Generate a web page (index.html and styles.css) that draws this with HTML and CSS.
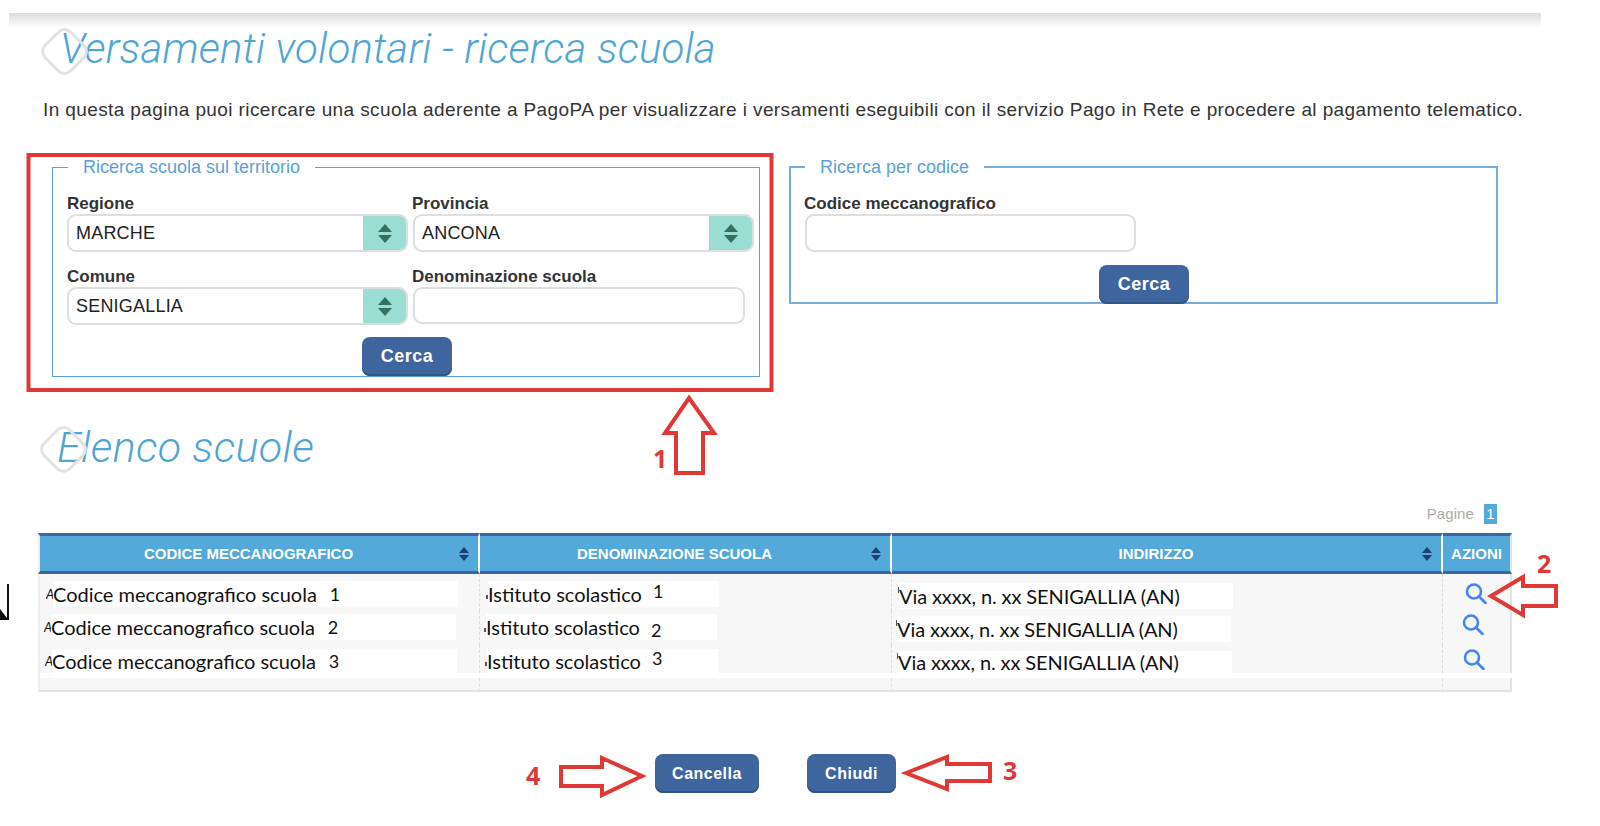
FILE: index.html
```html
<!DOCTYPE html>
<html lang="it">
<head>
<meta charset="UTF-8">
<title>Versamenti volontari - ricerca scuola</title>
<link rel="stylesheet" href="styles.css">
</head>
<body>
<div class="topbar"></div>

<h1 class="title">Versamenti volontari - ricerca scuola</h1>
<p class="intro">In questa pagina puoi ricercare una scuola aderente a PagoPA per visualizzare i versamenti eseguibili con il servizio Pago in Rete e procedere al pagamento telematico.</p>

<div class="forms">
    <fieldset class="box box-area">
        <legend>Ricerca scuola sul territorio</legend>
        <div class="fields">
            <div class="field">
                <label>Regione</label>
                <div class="select"><span class="select-val">MARCHE</span><span class="select-btn"><i class="up"></i><i class="down"></i></span></div>
            </div>
            <div class="field field-r">
                <label>Provincia</label>
                <div class="select"><span class="select-val">ANCONA</span><span class="select-btn"><i class="up"></i><i class="down"></i></span></div>
            </div>
            <div class="field">
                <label>Comune</label>
                <div class="select"><span class="select-val">SENIGALLIA</span><span class="select-btn"><i class="up"></i><i class="down"></i></span></div>
            </div>
            <div class="field field-r">
                <label>Denominazione scuola</label>
                <input class="text-in text-name" type="text">
            </div>
        </div>
        <div class="btn-row btn-row-area"><button class="btn btn-search">Cerca</button></div>
    </fieldset>

    <fieldset class="box box-code">
        <legend>Ricerca per codice</legend>
        <div class="field">
            <label>Codice meccanografico</label>
            <input class="text-in text-code" type="text">
        </div>
        <div class="btn-row btn-row-code"><button class="btn btn-search">Cerca</button></div>
    </fieldset>
</div>

<h2 class="title title-list">Elenco scuole</h2>

<div class="pager"><span class="pager-txt">Pagine</span><b>1</b></div>

<table class="list">
    <colgroup><col class="c1"><col class="c2"><col class="c3"><col class="c4"></colgroup>
    <thead>
        <tr>
            <th><div class="th-in"><span>CODICE MECCANOGRAFICO</span><span class="sort"><i class="up"></i><i class="down"></i></span></div></th>
            <th><div class="th-in"><span>DENOMINAZIONE SCUOLA</span><span class="sort"><i class="up"></i><i class="down"></i></span></div></th>
            <th><div class="th-in"><span>INDIRIZZO</span><span class="sort"><i class="up"></i><i class="down"></i></span></div></th>
            <th>AZIONI</th>
        </tr>
    </thead>
    <tbody>
        <tr class="r1">
            <td><div class="cell"><span class="stub stub-a">A</span><div class="patch patch-code">Codice meccanografico scuola<span class="num num-code">1</span></div></div></td>
            <td><div class="cell"><span class="cut cut-dot"></span><div class="patch patch-name">Istituto scolastico<span class="num num-up">1</span></div></div></td>
            <td><div class="cell cell-addr"><span class="cut cut-tick"></span><div class="patch patch-addr">Via xxxx, n. xx SENIGALLIA (AN)</div></div></td>
            <td><svg class="lens" viewBox="0 0 22 21"><circle cx="9" cy="8.5" r="7"/><line x1="14" y1="13.5" x2="20.5" y2="20"/></svg></td>
        </tr>
        <tr class="r2">
            <td><div class="cell"><span class="stub stub-a">A</span><div class="patch patch-code">Codice meccanografico scuola<span class="num num-code">2</span></div></div></td>
            <td><div class="cell"><span class="cut cut-dot"></span><div class="patch patch-name">Istituto scolastico<span class="num num-down">2</span></div></div></td>
            <td><div class="cell cell-addr"><span class="cut cut-tick"></span><div class="patch patch-addr">Via xxxx, n. xx SENIGALLIA (AN)</div></div></td>
            <td><svg class="lens" viewBox="0 0 22 21"><circle cx="9" cy="8.5" r="7"/><line x1="14" y1="13.5" x2="20.5" y2="20"/></svg></td>
        </tr>
        <tr class="r3">
            <td><div class="cell"><span class="stub stub-a">A</span><div class="patch patch-code">Codice meccanografico scuola<span class="num num-code">3</span></div></div></td>
            <td><div class="cell"><span class="cut cut-dot"></span><div class="patch patch-name">Istituto scolastico<span class="num num-up">3</span></div></div></td>
            <td><div class="cell cell-addr"><span class="cut cut-tick"></span><div class="patch patch-addr">Via xxxx, n. xx SENIGALLIA (AN)</div></div></td>
            <td><svg class="lens" viewBox="0 0 22 21"><circle cx="9" cy="8.5" r="7"/><line x1="14" y1="13.5" x2="20.5" y2="20"/></svg></td>
        </tr>
        <tr class="strip"><td colspan="4"></td></tr>
        <tr class="rest"><td></td><td></td><td></td><td></td></tr>
    </tbody>
</table>

<div class="actions">
    <button class="btn btn-cancel">Cancella</button>
    <button class="btn btn-close">Chiudi</button>
</div>

<!-- frecce e riquadro rossi disegnati sopra la pagina -->
<svg class="notes" viewBox="0 0 1600 826">
    <rect class="mark" x="28.5" y="155" width="743" height="235"/>
    <path class="mark" d="M689 398 L714 433 L703 433 L703 473 L676 473 L676 433 L665 433 Z"/>
    <path class="mark" d="M1491 596 L1523 577 L1523 586 L1556 586 L1556 606 L1523 606 L1523 615 Z"/>
    <path class="mark" d="M906 773 L947 757 L947 764 L990 764 L990 781 L947 781 L947 789 Z"/>
    <path class="mark" d="M642 776 L602 758 L602 767 L561 767 L561 786 L602 786 L602 795 Z"/>
    <text class="note-num" x="653" y="468">1</text>
    <text class="note-num" x="1537" y="573">2</text>
    <text class="note-num" x="1003" y="780">3</text>
    <text class="note-num" x="526" y="785">4</text>
    <path class="crumb-fill" d="M0 609 L7 618 L0 618 Z"/>
    <path class="crumb-line" d="M8 584 L8 618 M0 619 L9 619"/>
</svg>
</body>
</html>
```

FILE: styles.css
```css
html, body{margin:0; padding:0; background:#fff;}
body{position:relative; height:826px; overflow:hidden; font-family:"Liberation Sans", Arial, sans-serif; color:#333;}

.topbar{height:15px; width:1532px; margin:13px 0 0 9px; background:linear-gradient(#dcdcdc, #fff);}

.title{position:relative; margin:1px 0 0 60px; height:40px; line-height:40px; font-family:Roboto, "Liberation Sans", sans-serif; font-size:42px; font-weight:300; font-style:italic; letter-spacing:.19px; color:#4fa5d3; white-space:nowrap;}
.title::before{content:""; position:absolute; left:-15px; top:3px; width:33px; height:33px; border:3px solid #e2e2e2; border-radius:10px; transform:rotate(45deg);}
.title-list{margin:50px 0 0 57px; font-size:43px; letter-spacing:.35px;}
.title-list::before{left:-13px; top:3px;}

.intro{margin:30px 0 0 43px; height:22px; line-height:22px; font-size:19px; letter-spacing:.39px; white-space:nowrap; color:#333;}

.forms{display:flex; align-items:flex-start; gap:29px; margin:36px 0 0 52px;}

.box{margin:0; padding:0 0 0 14px; border:1px solid #5b9fd8; box-sizing:border-box;}
.box legend{margin-left:1px; padding:0 15px; height:20px; line-height:20px; font-size:18px; color:#5b9fd8;}
.box-area{width:708px; height:220px;}
.box-code{width:709px; height:147px; padding-left:13px; border:2px solid #74acdd;}

.fields{display:grid; grid-template-columns:345px 345px; row-gap:15px; padding-top:17px;}
.field label{display:block; height:20px; line-height:20px; font-size:17px; font-weight:bold; color:#333;}
.field-r .select{margin-left:1px;}
.box-code .field{padding-top:17px;}

.select{display:flex; width:341px; height:38px; border:2px solid #dedede; border-radius:9px; box-sizing:border-box; overflow:hidden; background:#fff;}
.select-val{flex:1; padding-left:7px; line-height:34px; font-size:18px; letter-spacing:.2px; color:#222;}
.select-btn{display:flex; flex-direction:column; align-items:center; justify-content:center; gap:3px; width:43px; background:#99ddd3;}
.select-btn .up{border-left:7px solid transparent; border-right:7px solid transparent; border-bottom:8px solid #34705f;}
.select-btn .down{border-left:7px solid transparent; border-right:7px solid transparent; border-top:8px solid #34705f;}

.text-in{display:block; height:38px; margin:0 0 0 1px; padding:0; border:2px solid #dedede; border-radius:9px; box-sizing:border-box; background:#fff;}
.text-name{width:332px; height:37px;}
.text-code{width:331px;}

.btn{padding:0; border:0; box-shadow:inset 0 -2px 0 #2f5488; border-radius:8px; box-sizing:border-box; background:#3f659f; color:#fff; font-family:"Liberation Sans", Arial, sans-serif; font-weight:bold; letter-spacing:.5px;}
.btn-search{width:90px; height:39px; font-size:18px;}
.btn-row{display:flex;}
.btn-row-area{margin:12px 0 0 295px;}
.btn-row-code{margin:13px 0 0 295px;}

.pager{display:flex; justify-content:flex-end; align-items:center; gap:10px; width:1497px; height:20px; margin-top:37px; font-size:15px; color:#aaa;}
.pager-txt{padding-bottom:2px; letter-spacing:.1px;}
.pager b{width:13px; height:20px; line-height:20px; text-align:center; font-weight:normal; background:#52a9da; color:#fff;}

.list{width:1474px; margin:9px 0 0 38px; border-collapse:separate; border-spacing:0; table-layout:fixed;}
.c1{width:442px;}
.c2{width:412px;}
.c3{width:551px;}
.c4{width:69px;}

.list th{height:41px; padding:0; box-sizing:border-box; border-top:3px solid #3a659f; border-bottom:3px solid #3a659f; border-right:2px solid #fff; background:#52a9da; color:#fff; font-size:15px; font-weight:bold;}
.list th:first-child{border-left:2px solid #eee;}
.list th:last-child{border-right:2px solid #e2e2e2;}
.th-in{display:grid; grid-template-columns:1fr 21px; align-items:center;}
.sort{display:flex; flex-direction:column; gap:2px; width:10px; margin-left:2px;}
.sort .up{border-left:5px solid transparent; border-right:5px solid transparent; border-bottom:6px solid #1f3f77;}
.sort .down{border-left:5px solid transparent; border-right:5px solid transparent; border-top:6px solid #1f3f77;}

.list td{padding:0; box-sizing:border-box; vertical-align:top; border-right:1px dashed #ddd; background:#f7f7f7;}
.list td:first-child{border-left:2px solid #eee;}
.list td:last-child{border-right:2px solid #e2e2e2;}
.r1 td{height:37px; padding-top:7px;}
.r2 td{height:34px; padding-top:3px;}
.r3 td{height:28px; padding-top:4px;}
.list .strip td{height:5px; padding:0; background:#fff; border-right:0;}
.list .rest td{height:14px; border-bottom:2px solid #e2e2e2;}

.cell{display:flex; align-items:center; font-family:Lato, "Open Sans", sans-serif; font-size:20px; color:#111;}
.r1 .cell{margin-left:6px;}
.r2 .cell{margin-left:4px;}
.r3 .cell{margin-left:5px;}
.cell-addr{margin-top:2px; letter-spacing:-.1px;}
.stub{overflow:hidden; font-size:13px; font-style:italic; line-height:14px;}
.stub-a{width:7px;}
/* resti di lettere tagliate a sinistra dei riquadri bianchi */
.cut{display:block; width:2px; background:#555;}
.cut-dot{height:4px; margin-top:6px;}
.cut-tick{width:1px; height:6px; margin-bottom:12px;}
.patch{display:flex; align-items:center; height:26px; background:#fff; white-space:nowrap;}
.r3 .patch{height:24px;}
.r3 .cell-addr .patch{height:22px;}
.patch-code{width:405px;}
.patch-name{width:231px;}
.patch-addr{width:334px;}
.num{margin-left:11px; font-size:18px;}
.num-code{margin-left:13px;}
.num-up{margin-bottom:6px;}
.num-down{margin-top:6px;}

.lens{display:block; width:22px; height:21px; fill:none; stroke:#4285f4; stroke-width:2.6; stroke-linecap:round;}
.r1 .lens{margin:2px 0 0 22px;}
.r2 .lens{margin:0 0 0 19px;}
.r3 .lens{margin:0 0 0 20px;}

.actions{display:flex; gap:48px; margin:62px 0 0 655px;}
.btn-cancel{width:104px; height:39px; font-size:16px;}
.btn-close{width:89px; height:39px; font-size:16px;}

.notes{position:absolute; left:0; top:0; width:1600px; height:826px; pointer-events:none;}
.mark{fill:none; stroke:#e03835; stroke-width:4;}
.note-num{font-family:"Open Sans", sans-serif; font-size:25px; font-weight:bold; fill:#e03835;}
.crumb-fill{fill:#111;}
.crumb-line{fill:none; stroke:#111; stroke-width:2;}
```
